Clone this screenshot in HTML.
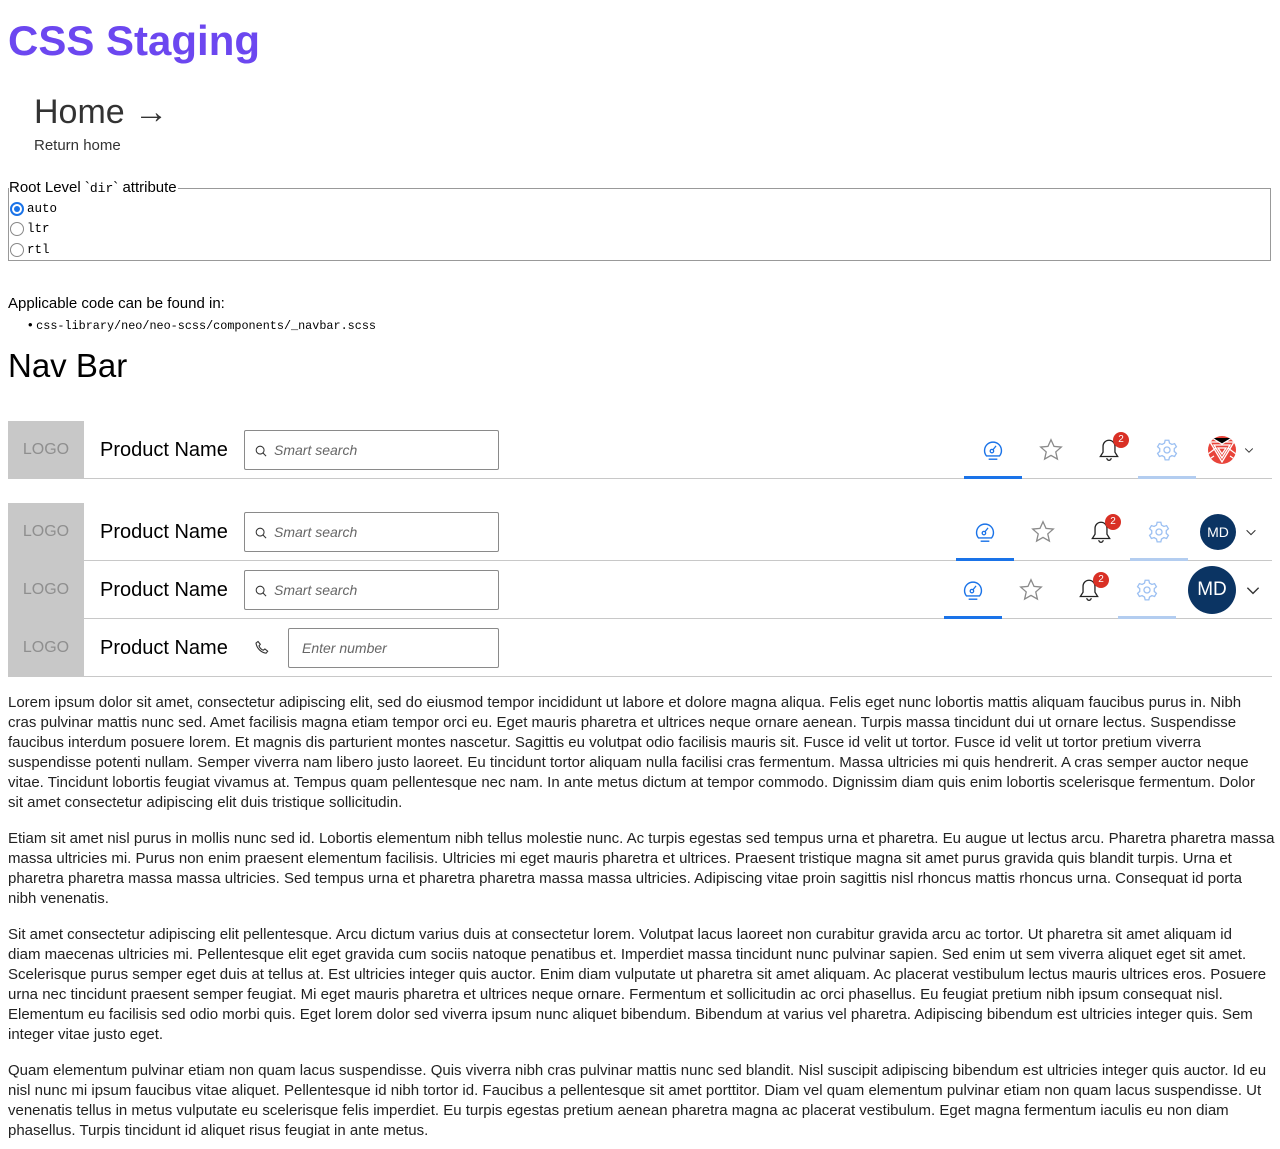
<!DOCTYPE html>
<html><head><meta charset="utf-8"><style>
*{box-sizing:border-box;margin:0;padding:0}
body{width:1280px;height:1149px;position:relative;background:#fff;font-family:"Liberation Sans",sans-serif;color:#000;overflow:hidden}
.a{position:absolute;white-space:nowrap}
.mono{font-family:"Liberation Mono",monospace}
.row{position:absolute;left:8px;width:1264px;height:58px;border-bottom:1px solid #c8c8c8}
.logo{position:absolute;left:0;top:0;width:76px;height:57px;background:#c8c8c8;color:#8f8f8f;font-size:16px;line-height:57px;text-align:center;font-weight:300}
.pn{position:absolute;left:92px;top:1px;line-height:57px;font-size:20px}
.inp{position:absolute;top:9px;height:40px;border:1px solid #8a8a8a;border-radius:2px;font-style:italic;color:#666;font-size:14px;line-height:38px}
.ic{position:absolute;top:16px;width:26px;height:26px}
.ul{position:absolute;bottom:-1px;width:58px;height:3px}
.badge{position:absolute;width:16px;height:16px;border-radius:50%;background:#d93025;color:#fff;font-size:10px;line-height:16px;text-align:center}
.av{position:absolute;border-radius:50%;background:#0b3463;color:#fff;text-align:center}
p{position:absolute;left:8px;font-size:15px;line-height:20px;white-space:nowrap;color:#222}
</style></head><body>
<svg width="0" height="0" style="position:absolute">
<defs>
<symbol id="dash" viewBox="0 0 24 24"><path d="M6 17.5A7.8 7.8 0 1 1 18 17.5z" fill="none" stroke="#1a73e8" stroke-width="1.3"/><circle cx="11" cy="13" r="1.6" fill="none" stroke="#1a73e8" stroke-width="1.2"/><path d="M12 11.8l2.8-3.6" stroke="#1a73e8" stroke-width="1.2"/><path d="M8 20.5h8" stroke="#1a73e8" stroke-width="1.3"/></symbol>
<symbol id="star" viewBox="0 0 24 24"><path d="M12 2.5l2.8 6.2 6.7.6-5.1 4.5 1.5 6.6L12 17l-5.9 3.4 1.5-6.6-5.1-4.5 6.7-.6z" fill="none" stroke="#8a8a8a" stroke-width="1.2"/></symbol>
<symbol id="bell" viewBox="0 0 24 24"><path d="M12 3a5.5 5.5 0 0 0-5.5 5.5V14L4 18h16l-2.5-4V8.5A5.5 5.5 0 0 0 12 3z" fill="none" stroke="#222" stroke-width="1.2"/><path d="M10 19.5a2 2 0 0 0 4 0" fill="none" stroke="#222" stroke-width="1.2"/></symbol>
<symbol id="gear" viewBox="0 0 24 24"><path d="M10.3 3h3.4l.6 2.6 2.2 1.3 2.5-.8 1.7 2.9-2 1.8v2.5l2 1.8-1.7 2.9-2.5-.8-2.2 1.3-.6 2.6h-3.4l-.6-2.6-2.2-1.3-2.5.8-1.7-2.9 2-1.8v-2.5l-2-1.8 1.7-2.9 2.5.8 2.2-1.3z" fill="none" stroke="#9cc0f2" stroke-width="1.2"/><circle cx="12" cy="12" r="2.8" fill="none" stroke="#9cc0f2" stroke-width="1.2"/></symbol>
<symbol id="chev" viewBox="0 0 16 16"><path d="M3 6l5 5 5-5" fill="none" stroke="#333" stroke-width="1.2"/></symbol>
<symbol id="srch" viewBox="0 0 16 16"><circle cx="7" cy="7" r="4.5" fill="none" stroke="#333" stroke-width="1.2"/><path d="M10.3 10.3l3.5 3.5" stroke="#333" stroke-width="1.2"/></symbol>
</defs></svg>

<div class="a" style="left:8px;top:11px;font-size:42px;font-weight:bold;color:#6c47f0;line-height:60px">CSS Staging</div>
<div class="a" style="left:34px;top:91px;font-size:34px;color:#333;line-height:42px">Home →</div>
<div class="a" style="left:34px;top:137px;font-size:15px;color:#333;line-height:18px">Return home</div>

<div class="a" style="left:8px;top:188px;width:1263px;height:73px;border:1px solid #999"></div>
<div class="a" style="left:9px;top:179px;font-size:15px;background:#fff;line-height:18px;padding-right:1px">Root Level `<span class="mono" style="font-size:13px">dir</span>` attribute</div>
<div class="a" style="left:10px;top:202px;width:14px;height:14px;border:2px solid #1a73e8;border-radius:50%"><div style="position:absolute;left:2px;top:2px;width:6px;height:6px;border-radius:50%;background:#1a73e8"></div></div>
<div class="a mono" style="left:27px;top:201px;font-size:12.5px;line-height:16px">auto</div>
<div class="a" style="left:10px;top:222px;width:14px;height:14px;border:1.5px solid #888;border-radius:50%"></div>
<div class="a mono" style="left:27px;top:221px;font-size:12.5px;line-height:16px">ltr</div>
<div class="a" style="left:10px;top:243px;width:14px;height:14px;border:1.5px solid #888;border-radius:50%"></div>
<div class="a mono" style="left:27px;top:242px;font-size:12.5px;line-height:16px">rtl</div>

<div class="a" style="left:8px;top:295px;font-size:15px;line-height:18px">Applicable code can be found in:</div>
<div class="a" style="left:28px;top:317px;font-size:13px;line-height:16px">• <span class="mono" style="font-size:11.8px">css-library/neo/neo-scss/components/_navbar.scss</span></div>
<div class="a" style="left:8px;top:345px;font-size:33px;line-height:42px">Nav Bar</div>

<!-- row 1 -->
<div class="row" style="top:421px">
<div class="logo">LOGO</div><div class="pn">Product Name</div>
<div class="inp" style="left:236px;width:255px"><svg style="position:absolute;left:9px;top:13px" width="14" height="14"><use href="#srch"/></svg><span style="position:absolute;left:29px">Smart search</span></div>
<svg class="ic" style="left:972px"><use href="#dash"/></svg><div class="ul" style="left:956px;background:#1a73e8"></div>
<svg class="ic" style="left:1030px"><use href="#star"/></svg>
<svg class="ic" style="left:1088px"><use href="#bell"/></svg><div class="badge" style="left:1105px;top:11px">2</div>
<svg class="ic" style="left:1146px"><use href="#gear"/></svg><div class="ul" style="left:1130px;background:#b3cdf0"></div>
<svg style="position:absolute;left:1200px;top:15px" width="28" height="28" viewBox="0 0 28 28"><defs><clipPath id="cc"><circle cx="14" cy="14" r="14"/></clipPath></defs><g clip-path="url(#cc)"><rect width="28" height="28" fill="#e8443a"/><path d="M2 6l12 20L26 6zM6 9l8 13 8-13zM10 12l4 6 4-6z" fill="none" stroke="#fff" stroke-width="1.3"/><path d="M0 18l8-6M20 12l8 6M4 2l10 6 10-6M0 24l6-4M22 20l6 4" stroke="#fff" stroke-width="1.2"/></g></svg>
<svg style="position:absolute;left:1235px;top:23px" width="12" height="12"><use href="#chev"/></svg>
</div>

<!-- row 2 -->
<div class="row" style="top:503px">
<div class="logo">LOGO</div><div class="pn">Product Name</div>
<div class="inp" style="left:236px;width:255px"><svg style="position:absolute;left:9px;top:13px" width="14" height="14"><use href="#srch"/></svg><span style="position:absolute;left:29px">Smart search</span></div>
<svg class="ic" style="left:964px"><use href="#dash"/></svg><div class="ul" style="left:948px;background:#1a73e8"></div>
<svg class="ic" style="left:1022px"><use href="#star"/></svg>
<svg class="ic" style="left:1080px"><use href="#bell"/></svg><div class="badge" style="left:1097px;top:11px">2</div>
<svg class="ic" style="left:1138px"><use href="#gear"/></svg><div class="ul" style="left:1122px;background:#b3cdf0"></div>
<div class="av" style="left:1192px;top:11px;width:36px;height:36px;line-height:36px;font-size:14px">MD</div>
<svg style="position:absolute;left:1236px;top:22px" width="14" height="14"><use href="#chev"/></svg>
</div>

<!-- row 3 -->
<div class="row" style="top:561px">
<div class="logo">LOGO</div><div class="pn">Product Name</div>
<div class="inp" style="left:236px;width:255px"><svg style="position:absolute;left:9px;top:13px" width="14" height="14"><use href="#srch"/></svg><span style="position:absolute;left:29px">Smart search</span></div>
<svg class="ic" style="left:952px"><use href="#dash"/></svg><div class="ul" style="left:936px;background:#1a73e8"></div>
<svg class="ic" style="left:1010px"><use href="#star"/></svg>
<svg class="ic" style="left:1068px"><use href="#bell"/></svg><div class="badge" style="left:1085px;top:11px">2</div>
<svg class="ic" style="left:1126px"><use href="#gear"/></svg><div class="ul" style="left:1110px;background:#b3cdf0"></div>
<div class="av" style="left:1180px;top:5px;width:48px;height:48px;line-height:48px;font-size:19px">MD</div>
<svg style="position:absolute;left:1236px;top:20px" width="18" height="18"><use href="#chev"/></svg>
</div>

<!-- row 4 -->
<div class="row" style="top:619px">
<div class="logo">LOGO</div><div class="pn">Product Name</div>
<svg style="position:absolute;left:246px;top:21px" width="16" height="16" viewBox="0 0 16 16"><path d="M4 1.5l2.3 2.8-1.3 1.6c.8 2 2.3 3.5 4.3 4.3l1.6-1.3 2.8 2.3-1.6 2c-5-.6-9.5-5.1-10.1-10.1z" fill="none" stroke="#333" stroke-width="1.1"/></svg>
<div class="inp" style="left:280px;width:211px"><span style="position:absolute;left:13px">Enter number</span></div>
</div>

<p style="top:693px">Lorem ipsum dolor sit amet, consectetur adipiscing elit, sed do eiusmod tempor incididunt ut labore et dolore magna aliqua. Felis eget nunc lobortis mattis aliquam faucibus purus in. Nibh<br>cras pulvinar mattis nunc sed. Amet facilisis magna etiam tempor orci eu. Eget mauris pharetra et ultrices neque ornare aenean. Turpis massa tincidunt dui ut ornare lectus. Suspendisse<br>faucibus interdum posuere lorem. Et magnis dis parturient montes nascetur. Sagittis eu volutpat odio facilisis mauris sit. Fusce id velit ut tortor. Fusce id velit ut tortor pretium viverra<br>suspendisse potenti nullam. Semper viverra nam libero justo laoreet. Eu tincidunt tortor aliquam nulla facilisi cras fermentum. Massa ultricies mi quis hendrerit. A cras semper auctor neque<br>vitae. Tincidunt lobortis feugiat vivamus at. Tempus quam pellentesque nec nam. In ante metus dictum at tempor commodo. Dignissim diam quis enim lobortis scelerisque fermentum. Dolor<br>sit amet consectetur adipiscing elit duis tristique sollicitudin.</p>
<p style="top:829px">Etiam sit amet nisl purus in mollis nunc sed id. Lobortis elementum nibh tellus molestie nunc. Ac turpis egestas sed tempus urna et pharetra. Eu augue ut lectus arcu. Pharetra pharetra massa<br>massa ultricies mi. Purus non enim praesent elementum facilisis. Ultricies mi eget mauris pharetra et ultrices. Praesent tristique magna sit amet purus gravida quis blandit turpis. Urna et<br>pharetra pharetra massa massa ultricies. Sed tempus urna et pharetra pharetra massa massa ultricies. Adipiscing vitae proin sagittis nisl rhoncus mattis rhoncus urna. Consequat id porta<br>nibh venenatis.</p>
<p style="top:925px">Sit amet consectetur adipiscing elit pellentesque. Arcu dictum varius duis at consectetur lorem. Volutpat lacus laoreet non curabitur gravida arcu ac tortor. Ut pharetra sit amet aliquam id<br>diam maecenas ultricies mi. Pellentesque elit eget gravida cum sociis natoque penatibus et. Imperdiet massa tincidunt nunc pulvinar sapien. Sed enim ut sem viverra aliquet eget sit amet.<br>Scelerisque purus semper eget duis at tellus at. Est ultricies integer quis auctor. Enim diam vulputate ut pharetra sit amet aliquam. Ac placerat vestibulum lectus mauris ultrices eros. Posuere<br>urna nec tincidunt praesent semper feugiat. Mi eget mauris pharetra et ultrices neque ornare. Fermentum et sollicitudin ac orci phasellus. Eu feugiat pretium nibh ipsum consequat nisl.<br>Elementum eu facilisis sed odio morbi quis. Eget lorem dolor sed viverra ipsum nunc aliquet bibendum. Bibendum at varius vel pharetra. Adipiscing bibendum est ultricies integer quis. Sem<br>integer vitae justo eget.</p>
<p style="top:1061px">Quam elementum pulvinar etiam non quam lacus suspendisse. Quis viverra nibh cras pulvinar mattis nunc sed blandit. Nisl suscipit adipiscing bibendum est ultricies integer quis auctor. Id eu<br>nisl nunc mi ipsum faucibus vitae aliquet. Pellentesque id nibh tortor id. Faucibus a pellentesque sit amet porttitor. Diam vel quam elementum pulvinar etiam non quam lacus suspendisse. Ut<br>venenatis tellus in metus vulputate eu scelerisque felis imperdiet. Eu turpis egestas pretium aenean pharetra magna ac placerat vestibulum. Eget magna fermentum iaculis eu non diam<br>phasellus. Turpis tincidunt id aliquet risus feugiat in ante metus.</p>
</body></html>
